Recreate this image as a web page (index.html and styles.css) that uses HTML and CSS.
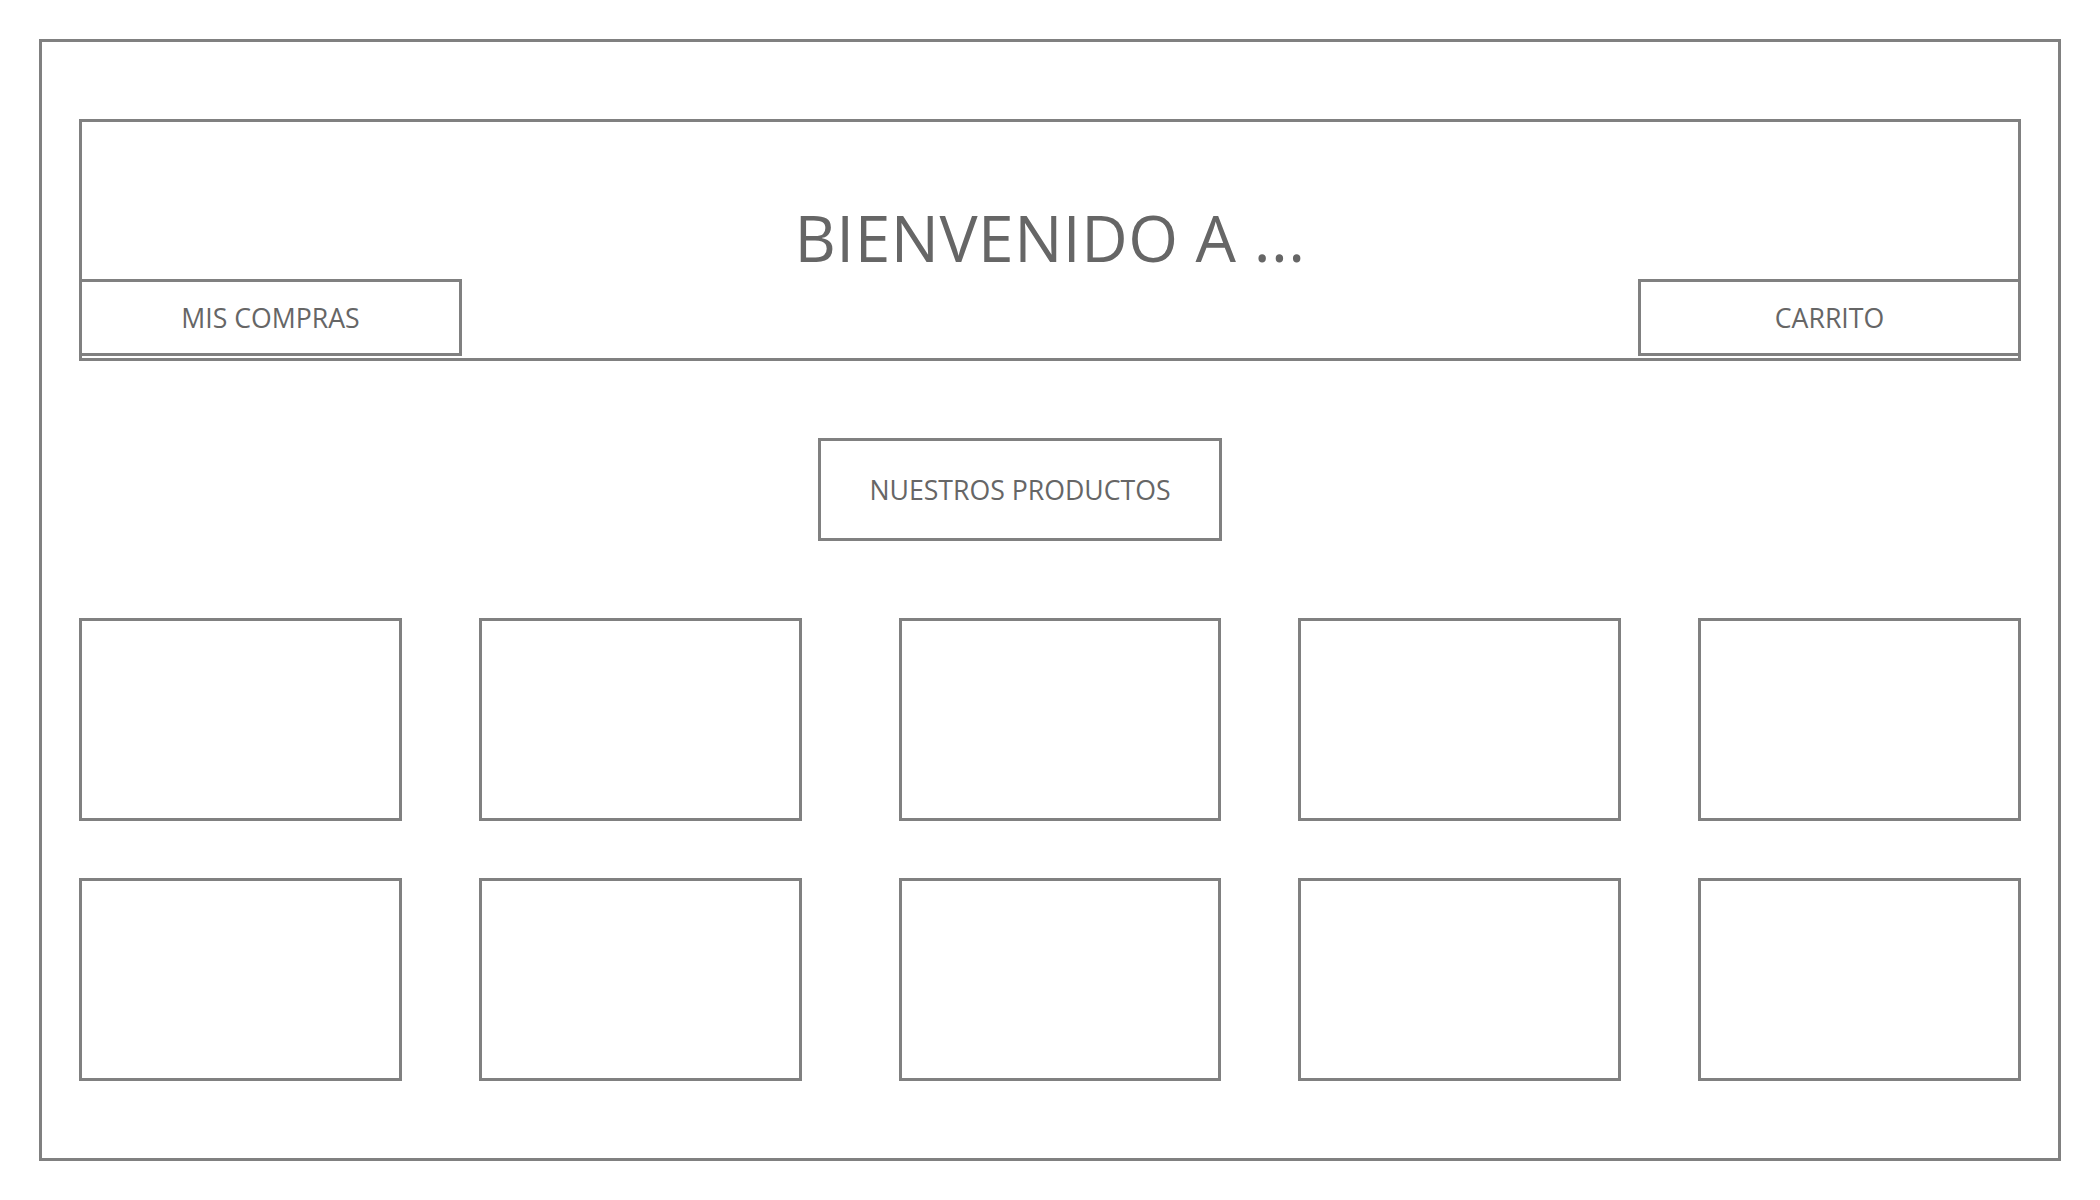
FILE: index.html
```html
<!DOCTYPE html>
<html lang="es">
<head>
    <meta charset="UTF-8">
    <title>Tienda</title>
    <link rel="stylesheet" href="styles.css">
</head>
<body>
    <div class="frame">
        <header class="header">
            <h1 class="title">BIENVENIDO A ...</h1>
            <nav class="nav">
                <a class="nav-btn" href="#">MIS COMPRAS</a>
                <a class="nav-btn" href="#">CARRITO</a>
            </nav>
        </header>

        <div class="section-title">NUESTROS PRODUCTOS</div>

        <div class="products">
            <div class="row">
                <div class="card"></div>
                <div class="card"></div>
                <div class="card"></div>
                <div class="card"></div>
                <div class="card"></div>
            </div>
            <div class="row">
                <div class="card"></div>
                <div class="card"></div>
                <div class="card"></div>
                <div class="card"></div>
                <div class="card"></div>
            </div>
        </div>
    </div>
</body>
</html>
```

FILE: styles.css
```css
* {
    box-sizing: border-box;
}
body {
    margin: 0;
    font-family: "Open Sans", "Noto Sans", sans-serif;
    color: #666666;
    background: #ffffff;
}
.frame {
    margin: 39px;
    width: 2022px;
    height: 1122px;
    border: 3px solid #808080;
    padding: 77px 37px;
}
.header {
    height: 242px;
    border: 3px solid #808080;
    display: flex;
    flex-direction: column;
}
.title {
    margin: 84px 0 0;
    font-size: 64px;
    font-weight: normal;
    line-height: 64px;
    letter-spacing: 0.5px;
    text-align: center;
}
.nav {
    display: flex;
    justify-content: space-between;
    margin: 9px -3px 0;
}
.nav-btn {
    width: 383px;
    height: 77px;
    border: 3px solid #808080;
    display: flex;
    align-items: center;
    justify-content: center;
    font-size: 26.67px;
    color: #666666;
    text-decoration: none;
}
.section-title {
    margin: 77px 0 0 739px;
    width: 404px;
    height: 103px;
    border: 3px solid #808080;
    display: flex;
    align-items: center;
    justify-content: center;
    font-size: 26.67px;
}
.products {
    margin-top: 77px;
    display: flex;
    flex-direction: column;
    gap: 57px;
}
.row {
    display: flex;
    gap: 77px;
}
.card {
    width: 323px;
    height: 203px;
    border: 3px solid #808080;
}
.card:nth-child(3) {
    margin-left: 20px;
}
```
